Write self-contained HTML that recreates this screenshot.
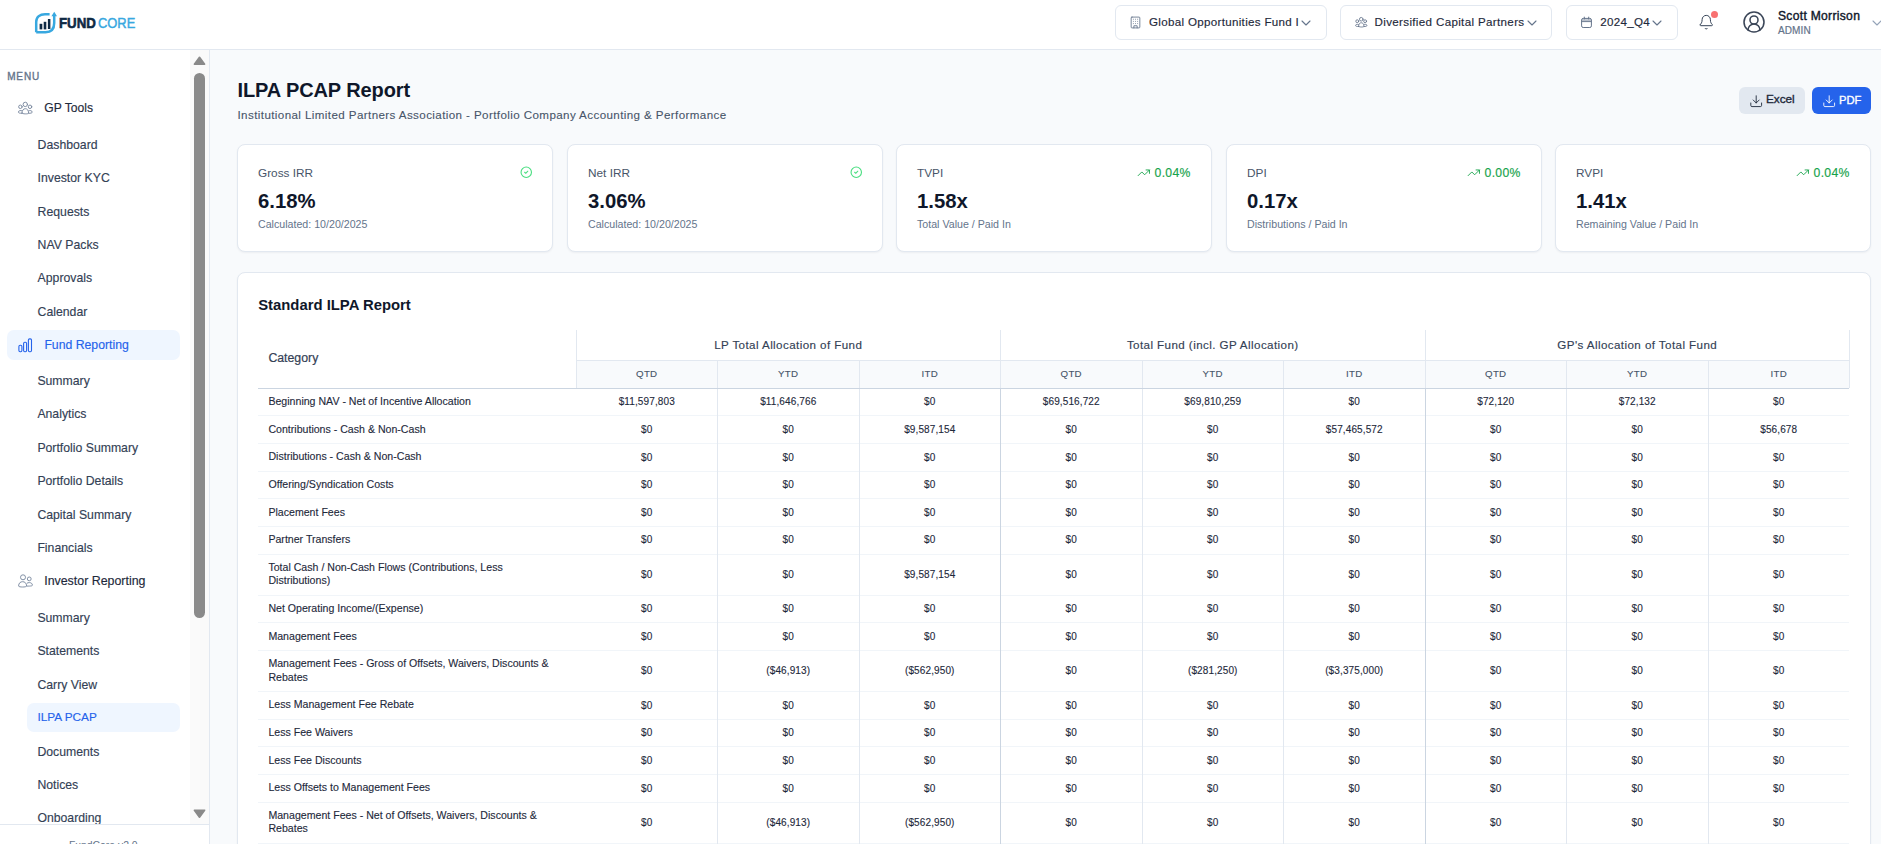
<!DOCTYPE html>
<html><head><meta charset="utf-8"><title>ILPA PCAP Report</title>
<style>
html,body{margin:0;padding:0;}
body{width:1881px;height:844px;overflow:hidden;position:relative;background:#f8fafc;font-family:"Liberation Sans",sans-serif;}
.t{position:absolute;white-space:nowrap;line-height:1;}
.b{position:absolute;}
</style></head><body>
<div class="b" style="left:0px;top:0px;width:1881px;height:49px;background:#fff;"></div>
<div class="b" style="left:0px;top:49px;width:1881px;height:1px;background:#e2e8f0;"></div>
<svg class="b" style="left:34px;top:11px;" width="23" height="23" viewBox="0 0 23 23" fill="none">
<path d="M2.2 21.2 L2.2 11 C2.2 5.8 6 3.2 11 3.2 L15.6 3.2" stroke="#38a8e0" stroke-width="2.5" stroke-linecap="butt"/>
<path d="M2.2 21.2 L11.5 21.2 C17.5 21.2 20.2 17.5 20.2 12 L20.2 4.5" stroke="#38a8e0" stroke-width="2.5"/>
<path d="M17.4 5.2 L20.2 0.8 L23 5.2 Z" fill="#38a8e0"/>
<rect x="5.6" y="12.8" width="2.7" height="5.6" fill="#0f2a44"/>
<rect x="9.7" y="10.8" width="2.6" height="7.6" fill="#0f2a44"/>
<rect x="13.9" y="8" width="2.5" height="10" fill="#0f2a44"/>
</svg>
<div class="t " style="left:59px;top:15.33px;font-size:15.2px;color:#0f2a44;font-weight:700;transform:scaleX(0.875);transform-origin:0 0;-webkit-text-stroke:0.6px #0f2a44;">FUND</div>
<div class="t " style="left:98.3px;top:15.33px;font-size:15.2px;color:#38a8e0;font-weight:400;transform:scaleX(0.85);transform-origin:0 0;-webkit-text-stroke:0.45px #38a8e0;">CORE</div>
<div class="b" style="left:1115px;top:5px;width:212px;height:35px;border:1px solid #e2e8f0;border-radius:6px;background:#fff;box-sizing:border-box;"></div>
<svg class="b" style="left:1128.9px;top:15.9px;" width="13" height="13" viewBox="0 0 24 24" fill="none" stroke="#64748b" stroke-width="1.6" stroke-linecap="round" stroke-linejoin="round"><rect width="16" height="20" x="4" y="2" rx="1.5" ry="1.5"/><path d="M9 22v-4h6v4"/><path d="M8 6h.01"/><path d="M16 6h.01"/><path d="M12 6h.01"/><path d="M12 10h.01"/><path d="M12 14h.01"/><path d="M16 10h.01"/><path d="M16 14h.01"/><path d="M8 10h.01"/><path d="M8 14h.01"/></svg>
<div class="t " style="left:1149px;top:16.28px;font-size:11.6px;color:#1e293b;font-weight:400;letter-spacing:0.31px;-webkit-text-stroke:0.15px #1e293b;">Global Opportunities Fund I</div>
<svg class="b" style="left:1297.6px;top:14.7px;" width="16" height="16" viewBox="0 0 24 24" fill="none" stroke="#64748b" stroke-width="1.6" stroke-linecap="round" stroke-linejoin="round"><path d="m6 9 6 6 6-6"/></svg>
<div class="b" style="left:1340px;top:5px;width:212px;height:35px;border:1px solid #e2e8f0;border-radius:6px;background:#fff;box-sizing:border-box;"></div>
<svg class="b" style="left:1351.7px;top:14.25px;" width="18.04" height="16.4" viewBox="0 0 22 20" fill="none" stroke="#64748b" stroke-width="1.0365853658536586" stroke-linecap="round" stroke-linejoin="round"><circle cx="11.3" cy="6.4" r="2.2"/><circle cx="6.4" cy="8.8" r="1.75"/><circle cx="16" cy="8.8" r="1.75"/><path d="M8 15.1 C8 12 9.6 10.7 11.3 10.7 C13 10.7 14.6 12 14.6 15.1 C14.6 16.2 8 16.2 8 15.1 Z"/><path d="M7.7 12.7 C6.9 12.3 4.4 12.4 4.4 14.1 C4.4 15 5.6 15.3 7.9 15.3"/><path d="M14.9 12.7 C15.7 12.3 18.2 12.4 18.2 14.1 C18.2 15 17 15.3 14.7 15.3"/></svg>
<div class="t " style="left:1374.5px;top:16.28px;font-size:11.6px;color:#1e293b;font-weight:400;letter-spacing:0.34px;-webkit-text-stroke:0.15px #1e293b;">Diversified Capital Partners</div>
<svg class="b" style="left:1524.1px;top:14.7px;" width="16" height="16" viewBox="0 0 24 24" fill="none" stroke="#64748b" stroke-width="1.6" stroke-linecap="round" stroke-linejoin="round"><path d="m6 9 6 6 6-6"/></svg>
<div class="b" style="left:1566px;top:5px;width:112px;height:35px;border:1px solid #e2e8f0;border-radius:6px;background:#fff;box-sizing:border-box;"></div>
<svg class="b" style="left:1578px;top:14px;" width="16" height="16" viewBox="0 0 16 16" fill="none"><rect x="3.6" y="4.4" width="9.8" height="9.1" rx="1.6" stroke="#64748b" stroke-width="1"/><path d="M4.1 5.2 H12.9 V7.6 H4.1 Z" fill="#64748b" fill-opacity="0.45"/><path d="M3.6 7.6 H13.4" stroke="#64748b" stroke-width="0.9"/><path d="M6.3 3.1 V5 M10.7 3.1 V5" stroke="#64748b" stroke-width="1" stroke-linecap="round"/></svg>
<div class="t " style="left:1600.3px;top:16.28px;font-size:11.6px;color:#1e293b;font-weight:400;letter-spacing:0.3px;-webkit-text-stroke:0.15px #1e293b;">2024_Q4</div>
<svg class="b" style="left:1648.6px;top:14.7px;" width="16" height="16" viewBox="0 0 24 24" fill="none" stroke="#64748b" stroke-width="1.6" stroke-linecap="round" stroke-linejoin="round"><path d="m6 9 6 6 6-6"/></svg>
<svg class="b" style="left:1697.9px;top:14.2px;" width="16.5" height="16.5" viewBox="0 0 24 24" fill="none" stroke="#334155" stroke-width="1.45" stroke-linecap="round" stroke-linejoin="round"><path d="M10.268 21a2 2 0 0 0 3.464 0"/><path d="M3.262 15.326A1 1 0 0 0 4 17h16a1 1 0 0 0 .74-1.673C19.41 13.956 18 12.499 18 8A6 6 0 0 0 6 8c0 4.499-1.411 5.956-2.738 7.326"/></svg>
<div class="b" style="left:1710.9px;top:10.8px;width:7px;height:7px;background:#f87171;border-radius:50%;"></div>
<svg class="b" style="left:1742.2px;top:10.1px;" width="24" height="24" viewBox="0 0 24 24" fill="none" stroke="#3b4658" stroke-width="1.55" stroke-linecap="round" stroke-linejoin="round"><path d="M18 20a6 6 0 0 0-12 0"/><circle cx="12" cy="10" r="4"/><circle cx="12" cy="12" r="10"/></svg>
<div class="t " style="left:1778px;top:9.86px;font-size:12.1px;color:#0f172a;font-weight:400;letter-spacing:0.3px;-webkit-text-stroke:0.4px #0f172a;">Scott Morrison</div>
<div class="t " style="left:1778px;top:26.43px;font-size:10.0px;color:#64748b;font-weight:400;letter-spacing:0.1px;-webkit-text-stroke:0.2px #64748b;">ADMIN</div>
<svg class="b" style="left:1868.5px;top:14.5px;" width="16" height="16" viewBox="0 0 24 24" fill="none" stroke="#94a3b8" stroke-width="1.6" stroke-linecap="round" stroke-linejoin="round"><path d="m6 9 6 6 6-6"/></svg>
<div class="b" style="left:0px;top:50px;width:209px;height:794px;background:#fff;"></div>
<div class="b" style="left:209px;top:50px;width:1px;height:794px;background:#e2e8f0;"></div>
<div class="b" style="left:190px;top:50px;width:19px;height:774px;background:#fafafa;"></div>
<svg class="b" style="left:192px;top:55px;" width="15" height="11" viewBox="0 0 15 11" fill="none"><path d="M7.5 2.3 L12.6 9.2 H2.4 Z" fill="#8a8a8a" stroke="#8a8a8a" stroke-width="1.6" stroke-linejoin="round"/></svg>
<div class="b" style="left:194px;top:73px;width:11px;height:545px;background:#8a8a8a;border-radius:5.5px;"></div>
<svg class="b" style="left:192px;top:808px;" width="15" height="11" viewBox="0 0 15 11" fill="none"><path d="M7.5 9.2 L12.6 2.2 H2.4 Z" fill="#8a8a8a" stroke="#8a8a8a" stroke-width="1.6" stroke-linejoin="round"/></svg>
<div class="t " style="left:7.2px;top:71.53px;font-size:10px;color:#64748b;font-weight:400;letter-spacing:0.85px;-webkit-text-stroke:0.35px #64748b;">MENU</div>
<svg class="b" style="left:14px;top:98px;" width="22.0" height="20.0" viewBox="0 0 22 20" fill="none" stroke="#7b8aa0" stroke-width="0.95" stroke-linecap="round" stroke-linejoin="round"><circle cx="11.3" cy="6.4" r="2.2"/><circle cx="6.4" cy="8.8" r="1.75"/><circle cx="16" cy="8.8" r="1.75"/><path d="M8 15.1 C8 12 9.6 10.7 11.3 10.7 C13 10.7 14.6 12 14.6 15.1 C14.6 16.2 8 16.2 8 15.1 Z"/><path d="M7.7 12.7 C6.9 12.3 4.4 12.4 4.4 14.1 C4.4 15 5.6 15.3 7.9 15.3"/><path d="M14.9 12.7 C15.7 12.3 18.2 12.4 18.2 14.1 C18.2 15 17 15.3 14.7 15.3"/></svg>
<div class="t " style="left:44.3px;top:101.76px;font-size:12.1px;color:#1e293b;font-weight:400;-webkit-text-stroke:0.15px #1e293b;">GP Tools</div>
<div class="t " style="left:37.6px;top:139.03px;font-size:12.25px;color:#334155;font-weight:400;-webkit-text-stroke:0.15px #334155;">Dashboard</div>
<div class="t " style="left:37.6px;top:172.35px;font-size:12.25px;color:#334155;font-weight:400;-webkit-text-stroke:0.15px #334155;">Investor KYC</div>
<div class="t " style="left:37.6px;top:205.67px;font-size:12.25px;color:#334155;font-weight:400;-webkit-text-stroke:0.15px #334155;">Requests</div>
<div class="t " style="left:37.6px;top:238.99px;font-size:12.25px;color:#334155;font-weight:400;-webkit-text-stroke:0.15px #334155;">NAV Packs</div>
<div class="t " style="left:37.6px;top:272.31px;font-size:12.25px;color:#334155;font-weight:400;-webkit-text-stroke:0.15px #334155;">Approvals</div>
<div class="t " style="left:37.6px;top:305.63px;font-size:12.25px;color:#334155;font-weight:400;-webkit-text-stroke:0.15px #334155;">Calendar</div>
<div class="b" style="left:7px;top:330px;width:173px;height:30px;background:#eff6ff;border-radius:7px;"></div>
<svg class="b" style="left:14px;top:334px;" width="22" height="22" viewBox="0 0 22 22" fill="none"><rect x="4.9" y="11.3" width="3" height="6.4" rx="1.2" stroke="#2563eb" stroke-width="1.1"/><rect x="9.6" y="8.3" width="3" height="9.4" rx="1.2" stroke="#2563eb" stroke-width="1.1"/><rect x="14.4" y="4.9" width="3.1" height="12.8" rx="1.2" stroke="#2563eb" stroke-width="1.1"/></svg>
<div class="t " style="left:44.4px;top:338.93px;font-size:12.25px;color:#2563eb;font-weight:400;-webkit-text-stroke:0.15px #2563eb;">Fund Reporting</div>
<div class="t " style="left:37.4px;top:374.83px;font-size:12.25px;color:#334155;font-weight:400;-webkit-text-stroke:0.15px #334155;">Summary</div>
<div class="t " style="left:37.4px;top:408.25px;font-size:12.25px;color:#334155;font-weight:400;-webkit-text-stroke:0.15px #334155;">Analytics</div>
<div class="t " style="left:37.4px;top:441.67px;font-size:12.25px;color:#334155;font-weight:400;-webkit-text-stroke:0.15px #334155;">Portfolio Summary</div>
<div class="t " style="left:37.4px;top:475.09px;font-size:12.25px;color:#334155;font-weight:400;-webkit-text-stroke:0.15px #334155;">Portfolio Details</div>
<div class="t " style="left:37.4px;top:508.51px;font-size:12.25px;color:#334155;font-weight:400;-webkit-text-stroke:0.15px #334155;">Capital Summary</div>
<div class="t " style="left:37.4px;top:541.93px;font-size:12.25px;color:#334155;font-weight:400;-webkit-text-stroke:0.15px #334155;">Financials</div>
<svg class="b" style="left:14px;top:570px;stroke:#7b8aa0;stroke-width:0.95;" width="22" height="22" viewBox="0 0 22 22" fill="none"><circle cx="9" cy="7.3" r="2.5"/><circle cx="15.25" cy="8.9" r="1.9"/><path d="M4.6 16.1 C4.6 12.9 6.6 11.7 8.6 11.7 C10.6 11.7 12.6 12.9 12.6 16.1 C12.6 17.3 4.6 17.3 4.6 16.1 Z"/><path d="M12.9 13.3 C13.5 12.8 14.5 12.6 15.4 12.6 C17 12.6 18.4 13.6 18.4 15.1 C18.4 16 17 16.1 12.7 16.1"/></svg>
<div class="t " style="left:44.2px;top:574.60px;font-size:12.4px;color:#1e293b;font-weight:400;-webkit-text-stroke:0.15px #1e293b;">Investor Reporting</div>
<div class="b" style="left:27px;top:703px;width:153px;height:29px;background:#eff6ff;border-radius:7px;"></div>
<div class="t " style="left:37.4px;top:611.73px;font-size:12.25px;color:#334155;font-weight:400;-webkit-text-stroke:0.15px #334155;">Summary</div>
<div class="t " style="left:37.4px;top:645.18px;font-size:12.25px;color:#334155;font-weight:400;-webkit-text-stroke:0.15px #334155;">Statements</div>
<div class="t " style="left:37.4px;top:678.63px;font-size:12.25px;color:#334155;font-weight:400;-webkit-text-stroke:0.15px #334155;">Carry View</div>
<div class="t " style="left:37.4px;top:712.46px;font-size:11.8px;color:#2563eb;font-weight:400;-webkit-text-stroke:0.15px #2563eb;">ILPA PCAP</div>
<div class="t " style="left:37.4px;top:745.53px;font-size:12.25px;color:#334155;font-weight:400;-webkit-text-stroke:0.15px #334155;">Documents</div>
<div class="t " style="left:37.4px;top:778.98px;font-size:12.25px;color:#334155;font-weight:400;-webkit-text-stroke:0.15px #334155;">Notices</div>
<div class="t " style="left:37.4px;top:812.43px;font-size:12.25px;color:#334155;font-weight:400;-webkit-text-stroke:0.15px #334155;">Onboarding</div>
<div class="b" style="left:0px;top:824px;width:209px;height:20px;background:#fff;"></div>
<div class="b" style="left:0px;top:824px;width:209px;height:1px;background:#e2e8f0;"></div>
<div class="t " style="left:68.9px;top:840.70px;font-size:10.4px;color:#64748b;font-weight:400;">FundCore v2.0</div>
<div class="b" style="left:210px;top:50px;width:1671px;height:794px;background:#f8fafc;"></div>
<div class="t " style="left:237.5px;top:79.77px;font-size:20px;color:#0f172a;font-weight:700;letter-spacing:-0.1px;">ILPA PCAP Report</div>
<div class="t " style="left:237.5px;top:109.08px;font-size:11.6px;color:#475569;font-weight:400;letter-spacing:0.4px;-webkit-text-stroke:0.1px #475569;">Institutional Limited Partners Association - Portfolio Company Accounting &amp; Performance</div>
<div class="b" style="left:1739px;top:87px;width:66px;height:27px;background:#e2e8f0;border-radius:6px;"></div>
<svg class="b" style="left:1748.8px;top:94.4px;" width="14.4" height="14.4" viewBox="0 0 24 24" fill="none" stroke="#1e293b" stroke-width="1.5" stroke-linecap="round" stroke-linejoin="round"><path d="M21 15v4a2 2 0 0 1-2 2H5a2 2 0 0 1-2-2v-4"/><polyline points="7 10 12 15 17 10"/><line x1="12" x2="12" y1="15" y2="3"/></svg>
<div class="t " style="left:1765.9px;top:94.41px;font-size:11.8px;color:#1e293b;font-weight:400;-webkit-text-stroke:0.35px #1e293b;">Excel</div>
<div class="b" style="left:1812px;top:87px;width:59px;height:27px;background:#2563eb;border-radius:6px;"></div>
<svg class="b" style="left:1821.8px;top:94.4px;" width="14.4" height="14.4" viewBox="0 0 24 24" fill="none" stroke="#ffffff" stroke-width="1.5" stroke-linecap="round" stroke-linejoin="round"><path d="M21 15v4a2 2 0 0 1-2 2H5a2 2 0 0 1-2-2v-4"/><polyline points="7 10 12 15 17 10"/><line x1="12" x2="12" y1="15" y2="3"/></svg>
<div class="t " style="left:1839px;top:94.92px;font-size:11.2px;color:#ffffff;font-weight:400;-webkit-text-stroke:0.35px #fff;">PDF</div>
<div class="b" style="left:237px;top:144px;width:316px;height:108px;background:#fff;border:1px solid #e2e8f0;border-radius:8px;box-sizing:border-box;box-shadow:0 1px 2px rgba(15,23,42,0.05);"></div>
<div class="t " style="left:258px;top:167.81px;font-size:11.8px;color:#475569;font-weight:400;">Gross IRR</div>
<div class="t " style="left:258px;top:190.52px;font-size:20.3px;color:#0f172a;font-weight:700;">6.18%</div>
<div class="t " style="left:258px;top:218.88px;font-size:10.65px;color:#64748b;font-weight:400;">Calculated: 10/20/2025</div>
<svg class="b" style="left:519.7px;top:166.1px;" width="12.5" height="12.5" viewBox="0 0 24 24" fill="none" stroke="#4ade80" stroke-width="2.1" stroke-linecap="round" stroke-linejoin="round"><circle cx="12" cy="12" r="10"/><path d="m9 12 2 2 4-4"/></svg>
<div class="b" style="left:567px;top:144px;width:316px;height:108px;background:#fff;border:1px solid #e2e8f0;border-radius:8px;box-sizing:border-box;box-shadow:0 1px 2px rgba(15,23,42,0.05);"></div>
<div class="t " style="left:588px;top:167.81px;font-size:11.8px;color:#475569;font-weight:400;">Net IRR</div>
<div class="t " style="left:588px;top:190.52px;font-size:20.3px;color:#0f172a;font-weight:700;">3.06%</div>
<div class="t " style="left:588px;top:218.88px;font-size:10.65px;color:#64748b;font-weight:400;">Calculated: 10/20/2025</div>
<svg class="b" style="left:849.7px;top:166.1px;" width="12.5" height="12.5" viewBox="0 0 24 24" fill="none" stroke="#4ade80" stroke-width="2.1" stroke-linecap="round" stroke-linejoin="round"><circle cx="12" cy="12" r="10"/><path d="m9 12 2 2 4-4"/></svg>
<div class="b" style="left:896px;top:144px;width:316px;height:108px;background:#fff;border:1px solid #e2e8f0;border-radius:8px;box-sizing:border-box;box-shadow:0 1px 2px rgba(15,23,42,0.05);"></div>
<div class="t " style="left:917px;top:167.81px;font-size:11.8px;color:#475569;font-weight:400;">TVPI</div>
<div class="t " style="left:917px;top:190.52px;font-size:20.3px;color:#0f172a;font-weight:700;">1.58x</div>
<div class="t " style="left:917px;top:218.88px;font-size:10.65px;color:#64748b;font-weight:400;">Total Value / Paid In</div>
<div class="t" style="right:690.2px;top:167.07px;font-size:12.2px;color:#16a34a;font-weight:400;text-align:right;letter-spacing:0.35px;-webkit-text-stroke:0.15px #16a34a;">0.04%</div>
<svg class="b" style="left:1137.0px;top:165.6px;" width="13.6" height="13.6" viewBox="0 0 24 24" fill="none" stroke="#16a34a" stroke-width="1.6" stroke-linecap="round" stroke-linejoin="round"><polyline points="22 7 13.5 15.5 8.5 10.5 2 17"/><polyline points="16 7 22 7 22 13"/></svg>
<div class="b" style="left:1226px;top:144px;width:316px;height:108px;background:#fff;border:1px solid #e2e8f0;border-radius:8px;box-sizing:border-box;box-shadow:0 1px 2px rgba(15,23,42,0.05);"></div>
<div class="t " style="left:1247px;top:167.81px;font-size:11.8px;color:#475569;font-weight:400;">DPI</div>
<div class="t " style="left:1247px;top:190.52px;font-size:20.3px;color:#0f172a;font-weight:700;">0.17x</div>
<div class="t " style="left:1247px;top:218.88px;font-size:10.65px;color:#64748b;font-weight:400;">Distributions / Paid In</div>
<div class="t" style="right:360.20000000000005px;top:167.07px;font-size:12.2px;color:#16a34a;font-weight:400;text-align:right;letter-spacing:0.35px;-webkit-text-stroke:0.15px #16a34a;">0.00%</div>
<svg class="b" style="left:1467.0px;top:165.6px;" width="13.6" height="13.6" viewBox="0 0 24 24" fill="none" stroke="#16a34a" stroke-width="1.6" stroke-linecap="round" stroke-linejoin="round"><polyline points="22 7 13.5 15.5 8.5 10.5 2 17"/><polyline points="16 7 22 7 22 13"/></svg>
<div class="b" style="left:1555px;top:144px;width:316px;height:108px;background:#fff;border:1px solid #e2e8f0;border-radius:8px;box-sizing:border-box;box-shadow:0 1px 2px rgba(15,23,42,0.05);"></div>
<div class="t " style="left:1576px;top:167.81px;font-size:11.8px;color:#475569;font-weight:400;">RVPI</div>
<div class="t " style="left:1576px;top:190.52px;font-size:20.3px;color:#0f172a;font-weight:700;">1.41x</div>
<div class="t " style="left:1576px;top:218.88px;font-size:10.65px;color:#64748b;font-weight:400;">Remaining Value / Paid In</div>
<div class="t" style="right:31.200000000000045px;top:167.07px;font-size:12.2px;color:#16a34a;font-weight:400;text-align:right;letter-spacing:0.35px;-webkit-text-stroke:0.15px #16a34a;">0.04%</div>
<svg class="b" style="left:1796.0px;top:165.6px;" width="13.6" height="13.6" viewBox="0 0 24 24" fill="none" stroke="#16a34a" stroke-width="1.6" stroke-linecap="round" stroke-linejoin="round"><polyline points="22 7 13.5 15.5 8.5 10.5 2 17"/><polyline points="16 7 22 7 22 13"/></svg>
<div class="b" style="left:237px;top:272px;width:1634px;height:600px;background:#fff;border:1px solid #e2e8f0;border-radius:8px;box-sizing:border-box;box-shadow:0 1px 2px rgba(15,23,42,0.05);"></div>
<div class="t " style="left:258.2px;top:298.13px;font-size:14.85px;color:#0f172a;font-weight:700;">Standard ILPA Report</div>
<div class="b" style="left:258px;top:360px;width:1591px;height:28px;background:transparent;"></div>
<div class="b" style="left:576px;top:360px;width:1273px;height:28px;background:#f8fafc;"></div>
<div class="b" style="left:576px;top:360px;width:1273px;height:1px;background:#e2e8f0;"></div>
<div class="b" style="left:258px;top:388px;width:1591px;height:1px;background:#cbd5e1;"></div>
<div class="t " style="left:268.4px;top:351.89px;font-size:12.3px;color:#334155;font-weight:400;-webkit-text-stroke:0.2px #334155;">Category</div>
<div class="b" style="left:576px;top:330px;width:1px;height:58px;background:#e2e8f0;"></div>
<div class="t" style="left:488.25px;width:600px;text-align:center;top:339.48px;font-size:11.6px;color:#334155;font-weight:400;letter-spacing:0.42px;-webkit-text-stroke:0.15px #334155;">LP Total Allocation of Fund</div>
<div class="t" style="left:346.75px;width:600px;text-align:center;top:369.19px;font-size:9.7px;color:#475569;font-weight:400;letter-spacing:0.3px;-webkit-text-stroke:0.12px #475569;">QTD</div>
<div class="b" style="left:717px;top:361px;width:1px;height:27px;background:#e2e8f0;"></div>
<div class="t" style="left:488.25px;width:600px;text-align:center;top:369.19px;font-size:9.7px;color:#475569;font-weight:400;letter-spacing:0.3px;-webkit-text-stroke:0.12px #475569;">YTD</div>
<div class="b" style="left:859px;top:361px;width:1px;height:27px;background:#e2e8f0;"></div>
<div class="t" style="left:629.75px;width:600px;text-align:center;top:369.19px;font-size:9.7px;color:#475569;font-weight:400;letter-spacing:0.3px;-webkit-text-stroke:0.12px #475569;">ITD</div>
<div class="b" style="left:1000px;top:330px;width:1px;height:58px;background:#e2e8f0;"></div>
<div class="t" style="left:912.75px;width:600px;text-align:center;top:339.48px;font-size:11.6px;color:#334155;font-weight:400;letter-spacing:0.42px;-webkit-text-stroke:0.15px #334155;">Total Fund (incl. GP Allocation)</div>
<div class="t" style="left:771.25px;width:600px;text-align:center;top:369.19px;font-size:9.7px;color:#475569;font-weight:400;letter-spacing:0.3px;-webkit-text-stroke:0.12px #475569;">QTD</div>
<div class="b" style="left:1142px;top:361px;width:1px;height:27px;background:#e2e8f0;"></div>
<div class="t" style="left:912.75px;width:600px;text-align:center;top:369.19px;font-size:9.7px;color:#475569;font-weight:400;letter-spacing:0.3px;-webkit-text-stroke:0.12px #475569;">YTD</div>
<div class="b" style="left:1283px;top:361px;width:1px;height:27px;background:#e2e8f0;"></div>
<div class="t" style="left:1054.25px;width:600px;text-align:center;top:369.19px;font-size:9.7px;color:#475569;font-weight:400;letter-spacing:0.3px;-webkit-text-stroke:0.12px #475569;">ITD</div>
<div class="b" style="left:1425px;top:330px;width:1px;height:58px;background:#e2e8f0;"></div>
<div class="t" style="left:1337.25px;width:600px;text-align:center;top:339.48px;font-size:11.6px;color:#334155;font-weight:400;letter-spacing:0.42px;-webkit-text-stroke:0.15px #334155;">GP's Allocation of Total Fund</div>
<div class="t" style="left:1195.75px;width:600px;text-align:center;top:369.19px;font-size:9.7px;color:#475569;font-weight:400;letter-spacing:0.3px;-webkit-text-stroke:0.12px #475569;">QTD</div>
<div class="b" style="left:1566px;top:361px;width:1px;height:27px;background:#e2e8f0;"></div>
<div class="t" style="left:1337.25px;width:600px;text-align:center;top:369.19px;font-size:9.7px;color:#475569;font-weight:400;letter-spacing:0.3px;-webkit-text-stroke:0.12px #475569;">YTD</div>
<div class="b" style="left:1708px;top:361px;width:1px;height:27px;background:#e2e8f0;"></div>
<div class="t" style="left:1478.75px;width:600px;text-align:center;top:369.19px;font-size:9.7px;color:#475569;font-weight:400;letter-spacing:0.3px;-webkit-text-stroke:0.12px #475569;">ITD</div>
<div class="b" style="left:1849px;top:330px;width:1px;height:58px;background:#e2e8f0;"></div>
<div class="t " style="left:268.4px;top:396.15px;font-size:10.6px;color:#1e293b;font-weight:400;-webkit-text-stroke:0.12px #1e293b;">Beginning NAV - Net of Incentive Allocation</div>
<div class="t" style="left:346.75px;width:600px;text-align:center;top:397.25px;font-size:10.0px;color:#1e293b;font-weight:400;letter-spacing:0.12px;-webkit-text-stroke:0.12px #1e293b;">$11,597,803</div>
<div class="t" style="left:488.25px;width:600px;text-align:center;top:397.25px;font-size:10.0px;color:#1e293b;font-weight:400;letter-spacing:0.12px;-webkit-text-stroke:0.12px #1e293b;">$11,646,766</div>
<div class="t" style="left:629.75px;width:600px;text-align:center;top:397.25px;font-size:10.0px;color:#1e293b;font-weight:400;letter-spacing:0.12px;-webkit-text-stroke:0.12px #1e293b;">$0</div>
<div class="t" style="left:771.25px;width:600px;text-align:center;top:397.25px;font-size:10.0px;color:#1e293b;font-weight:400;letter-spacing:0.12px;-webkit-text-stroke:0.12px #1e293b;">$69,516,722</div>
<div class="t" style="left:912.75px;width:600px;text-align:center;top:397.25px;font-size:10.0px;color:#1e293b;font-weight:400;letter-spacing:0.12px;-webkit-text-stroke:0.12px #1e293b;">$69,810,259</div>
<div class="t" style="left:1054.25px;width:600px;text-align:center;top:397.25px;font-size:10.0px;color:#1e293b;font-weight:400;letter-spacing:0.12px;-webkit-text-stroke:0.12px #1e293b;">$0</div>
<div class="t" style="left:1195.75px;width:600px;text-align:center;top:397.25px;font-size:10.0px;color:#1e293b;font-weight:400;letter-spacing:0.12px;-webkit-text-stroke:0.12px #1e293b;">$72,120</div>
<div class="t" style="left:1337.25px;width:600px;text-align:center;top:397.25px;font-size:10.0px;color:#1e293b;font-weight:400;letter-spacing:0.12px;-webkit-text-stroke:0.12px #1e293b;">$72,132</div>
<div class="t" style="left:1478.75px;width:600px;text-align:center;top:397.25px;font-size:10.0px;color:#1e293b;font-weight:400;letter-spacing:0.12px;-webkit-text-stroke:0.12px #1e293b;">$0</div>
<div class="b" style="left:258px;top:415px;width:1591px;height:1px;background:#f1f5f9;"></div>
<div class="t " style="left:268.4px;top:423.79px;font-size:10.6px;color:#1e293b;font-weight:400;-webkit-text-stroke:0.12px #1e293b;">Contributions - Cash &amp; Non-Cash</div>
<div class="t" style="left:346.75px;width:600px;text-align:center;top:424.89px;font-size:10.0px;color:#1e293b;font-weight:400;letter-spacing:0.12px;-webkit-text-stroke:0.12px #1e293b;">$0</div>
<div class="t" style="left:488.25px;width:600px;text-align:center;top:424.89px;font-size:10.0px;color:#1e293b;font-weight:400;letter-spacing:0.12px;-webkit-text-stroke:0.12px #1e293b;">$0</div>
<div class="t" style="left:629.75px;width:600px;text-align:center;top:424.89px;font-size:10.0px;color:#1e293b;font-weight:400;letter-spacing:0.12px;-webkit-text-stroke:0.12px #1e293b;">$9,587,154</div>
<div class="t" style="left:771.25px;width:600px;text-align:center;top:424.89px;font-size:10.0px;color:#1e293b;font-weight:400;letter-spacing:0.12px;-webkit-text-stroke:0.12px #1e293b;">$0</div>
<div class="t" style="left:912.75px;width:600px;text-align:center;top:424.89px;font-size:10.0px;color:#1e293b;font-weight:400;letter-spacing:0.12px;-webkit-text-stroke:0.12px #1e293b;">$0</div>
<div class="t" style="left:1054.25px;width:600px;text-align:center;top:424.89px;font-size:10.0px;color:#1e293b;font-weight:400;letter-spacing:0.12px;-webkit-text-stroke:0.12px #1e293b;">$57,465,572</div>
<div class="t" style="left:1195.75px;width:600px;text-align:center;top:424.89px;font-size:10.0px;color:#1e293b;font-weight:400;letter-spacing:0.12px;-webkit-text-stroke:0.12px #1e293b;">$0</div>
<div class="t" style="left:1337.25px;width:600px;text-align:center;top:424.89px;font-size:10.0px;color:#1e293b;font-weight:400;letter-spacing:0.12px;-webkit-text-stroke:0.12px #1e293b;">$0</div>
<div class="t" style="left:1478.75px;width:600px;text-align:center;top:424.89px;font-size:10.0px;color:#1e293b;font-weight:400;letter-spacing:0.12px;-webkit-text-stroke:0.12px #1e293b;">$56,678</div>
<div class="b" style="left:258px;top:443px;width:1591px;height:1px;background:#f1f5f9;"></div>
<div class="t " style="left:268.4px;top:451.43px;font-size:10.6px;color:#1e293b;font-weight:400;-webkit-text-stroke:0.12px #1e293b;">Distributions - Cash &amp; Non-Cash</div>
<div class="t" style="left:346.75px;width:600px;text-align:center;top:452.53px;font-size:10.0px;color:#1e293b;font-weight:400;letter-spacing:0.12px;-webkit-text-stroke:0.12px #1e293b;">$0</div>
<div class="t" style="left:488.25px;width:600px;text-align:center;top:452.53px;font-size:10.0px;color:#1e293b;font-weight:400;letter-spacing:0.12px;-webkit-text-stroke:0.12px #1e293b;">$0</div>
<div class="t" style="left:629.75px;width:600px;text-align:center;top:452.53px;font-size:10.0px;color:#1e293b;font-weight:400;letter-spacing:0.12px;-webkit-text-stroke:0.12px #1e293b;">$0</div>
<div class="t" style="left:771.25px;width:600px;text-align:center;top:452.53px;font-size:10.0px;color:#1e293b;font-weight:400;letter-spacing:0.12px;-webkit-text-stroke:0.12px #1e293b;">$0</div>
<div class="t" style="left:912.75px;width:600px;text-align:center;top:452.53px;font-size:10.0px;color:#1e293b;font-weight:400;letter-spacing:0.12px;-webkit-text-stroke:0.12px #1e293b;">$0</div>
<div class="t" style="left:1054.25px;width:600px;text-align:center;top:452.53px;font-size:10.0px;color:#1e293b;font-weight:400;letter-spacing:0.12px;-webkit-text-stroke:0.12px #1e293b;">$0</div>
<div class="t" style="left:1195.75px;width:600px;text-align:center;top:452.53px;font-size:10.0px;color:#1e293b;font-weight:400;letter-spacing:0.12px;-webkit-text-stroke:0.12px #1e293b;">$0</div>
<div class="t" style="left:1337.25px;width:600px;text-align:center;top:452.53px;font-size:10.0px;color:#1e293b;font-weight:400;letter-spacing:0.12px;-webkit-text-stroke:0.12px #1e293b;">$0</div>
<div class="t" style="left:1478.75px;width:600px;text-align:center;top:452.53px;font-size:10.0px;color:#1e293b;font-weight:400;letter-spacing:0.12px;-webkit-text-stroke:0.12px #1e293b;">$0</div>
<div class="b" style="left:258px;top:471px;width:1591px;height:1px;background:#f1f5f9;"></div>
<div class="t " style="left:268.4px;top:479.07px;font-size:10.6px;color:#1e293b;font-weight:400;-webkit-text-stroke:0.12px #1e293b;">Offering/Syndication Costs</div>
<div class="t" style="left:346.75px;width:600px;text-align:center;top:480.17px;font-size:10.0px;color:#1e293b;font-weight:400;letter-spacing:0.12px;-webkit-text-stroke:0.12px #1e293b;">$0</div>
<div class="t" style="left:488.25px;width:600px;text-align:center;top:480.17px;font-size:10.0px;color:#1e293b;font-weight:400;letter-spacing:0.12px;-webkit-text-stroke:0.12px #1e293b;">$0</div>
<div class="t" style="left:629.75px;width:600px;text-align:center;top:480.17px;font-size:10.0px;color:#1e293b;font-weight:400;letter-spacing:0.12px;-webkit-text-stroke:0.12px #1e293b;">$0</div>
<div class="t" style="left:771.25px;width:600px;text-align:center;top:480.17px;font-size:10.0px;color:#1e293b;font-weight:400;letter-spacing:0.12px;-webkit-text-stroke:0.12px #1e293b;">$0</div>
<div class="t" style="left:912.75px;width:600px;text-align:center;top:480.17px;font-size:10.0px;color:#1e293b;font-weight:400;letter-spacing:0.12px;-webkit-text-stroke:0.12px #1e293b;">$0</div>
<div class="t" style="left:1054.25px;width:600px;text-align:center;top:480.17px;font-size:10.0px;color:#1e293b;font-weight:400;letter-spacing:0.12px;-webkit-text-stroke:0.12px #1e293b;">$0</div>
<div class="t" style="left:1195.75px;width:600px;text-align:center;top:480.17px;font-size:10.0px;color:#1e293b;font-weight:400;letter-spacing:0.12px;-webkit-text-stroke:0.12px #1e293b;">$0</div>
<div class="t" style="left:1337.25px;width:600px;text-align:center;top:480.17px;font-size:10.0px;color:#1e293b;font-weight:400;letter-spacing:0.12px;-webkit-text-stroke:0.12px #1e293b;">$0</div>
<div class="t" style="left:1478.75px;width:600px;text-align:center;top:480.17px;font-size:10.0px;color:#1e293b;font-weight:400;letter-spacing:0.12px;-webkit-text-stroke:0.12px #1e293b;">$0</div>
<div class="b" style="left:258px;top:498px;width:1591px;height:1px;background:#f1f5f9;"></div>
<div class="t " style="left:268.4px;top:506.71px;font-size:10.6px;color:#1e293b;font-weight:400;-webkit-text-stroke:0.12px #1e293b;">Placement Fees</div>
<div class="t" style="left:346.75px;width:600px;text-align:center;top:507.81px;font-size:10.0px;color:#1e293b;font-weight:400;letter-spacing:0.12px;-webkit-text-stroke:0.12px #1e293b;">$0</div>
<div class="t" style="left:488.25px;width:600px;text-align:center;top:507.81px;font-size:10.0px;color:#1e293b;font-weight:400;letter-spacing:0.12px;-webkit-text-stroke:0.12px #1e293b;">$0</div>
<div class="t" style="left:629.75px;width:600px;text-align:center;top:507.81px;font-size:10.0px;color:#1e293b;font-weight:400;letter-spacing:0.12px;-webkit-text-stroke:0.12px #1e293b;">$0</div>
<div class="t" style="left:771.25px;width:600px;text-align:center;top:507.81px;font-size:10.0px;color:#1e293b;font-weight:400;letter-spacing:0.12px;-webkit-text-stroke:0.12px #1e293b;">$0</div>
<div class="t" style="left:912.75px;width:600px;text-align:center;top:507.81px;font-size:10.0px;color:#1e293b;font-weight:400;letter-spacing:0.12px;-webkit-text-stroke:0.12px #1e293b;">$0</div>
<div class="t" style="left:1054.25px;width:600px;text-align:center;top:507.81px;font-size:10.0px;color:#1e293b;font-weight:400;letter-spacing:0.12px;-webkit-text-stroke:0.12px #1e293b;">$0</div>
<div class="t" style="left:1195.75px;width:600px;text-align:center;top:507.81px;font-size:10.0px;color:#1e293b;font-weight:400;letter-spacing:0.12px;-webkit-text-stroke:0.12px #1e293b;">$0</div>
<div class="t" style="left:1337.25px;width:600px;text-align:center;top:507.81px;font-size:10.0px;color:#1e293b;font-weight:400;letter-spacing:0.12px;-webkit-text-stroke:0.12px #1e293b;">$0</div>
<div class="t" style="left:1478.75px;width:600px;text-align:center;top:507.81px;font-size:10.0px;color:#1e293b;font-weight:400;letter-spacing:0.12px;-webkit-text-stroke:0.12px #1e293b;">$0</div>
<div class="b" style="left:258px;top:526px;width:1591px;height:1px;background:#f1f5f9;"></div>
<div class="t " style="left:268.4px;top:534.35px;font-size:10.6px;color:#1e293b;font-weight:400;-webkit-text-stroke:0.12px #1e293b;">Partner Transfers</div>
<div class="t" style="left:346.75px;width:600px;text-align:center;top:535.46px;font-size:10.0px;color:#1e293b;font-weight:400;letter-spacing:0.12px;-webkit-text-stroke:0.12px #1e293b;">$0</div>
<div class="t" style="left:488.25px;width:600px;text-align:center;top:535.46px;font-size:10.0px;color:#1e293b;font-weight:400;letter-spacing:0.12px;-webkit-text-stroke:0.12px #1e293b;">$0</div>
<div class="t" style="left:629.75px;width:600px;text-align:center;top:535.46px;font-size:10.0px;color:#1e293b;font-weight:400;letter-spacing:0.12px;-webkit-text-stroke:0.12px #1e293b;">$0</div>
<div class="t" style="left:771.25px;width:600px;text-align:center;top:535.46px;font-size:10.0px;color:#1e293b;font-weight:400;letter-spacing:0.12px;-webkit-text-stroke:0.12px #1e293b;">$0</div>
<div class="t" style="left:912.75px;width:600px;text-align:center;top:535.46px;font-size:10.0px;color:#1e293b;font-weight:400;letter-spacing:0.12px;-webkit-text-stroke:0.12px #1e293b;">$0</div>
<div class="t" style="left:1054.25px;width:600px;text-align:center;top:535.46px;font-size:10.0px;color:#1e293b;font-weight:400;letter-spacing:0.12px;-webkit-text-stroke:0.12px #1e293b;">$0</div>
<div class="t" style="left:1195.75px;width:600px;text-align:center;top:535.46px;font-size:10.0px;color:#1e293b;font-weight:400;letter-spacing:0.12px;-webkit-text-stroke:0.12px #1e293b;">$0</div>
<div class="t" style="left:1337.25px;width:600px;text-align:center;top:535.46px;font-size:10.0px;color:#1e293b;font-weight:400;letter-spacing:0.12px;-webkit-text-stroke:0.12px #1e293b;">$0</div>
<div class="t" style="left:1478.75px;width:600px;text-align:center;top:535.46px;font-size:10.0px;color:#1e293b;font-weight:400;letter-spacing:0.12px;-webkit-text-stroke:0.12px #1e293b;">$0</div>
<div class="b" style="left:258px;top:554px;width:1591px;height:1px;background:#f1f5f9;"></div>
<div class="t " style="left:268.4px;top:562.02px;font-size:10.6px;color:#1e293b;font-weight:400;-webkit-text-stroke:0.12px #1e293b;">Total Cash / Non-Cash Flows (Contributions, Less</div>
<div class="t " style="left:268.4px;top:575.42px;font-size:10.6px;color:#1e293b;font-weight:400;-webkit-text-stroke:0.12px #1e293b;">Distributions)</div>
<div class="t" style="left:346.75px;width:600px;text-align:center;top:569.82px;font-size:10.0px;color:#1e293b;font-weight:400;letter-spacing:0.12px;-webkit-text-stroke:0.12px #1e293b;">$0</div>
<div class="t" style="left:488.25px;width:600px;text-align:center;top:569.82px;font-size:10.0px;color:#1e293b;font-weight:400;letter-spacing:0.12px;-webkit-text-stroke:0.12px #1e293b;">$0</div>
<div class="t" style="left:629.75px;width:600px;text-align:center;top:569.82px;font-size:10.0px;color:#1e293b;font-weight:400;letter-spacing:0.12px;-webkit-text-stroke:0.12px #1e293b;">$9,587,154</div>
<div class="t" style="left:771.25px;width:600px;text-align:center;top:569.82px;font-size:10.0px;color:#1e293b;font-weight:400;letter-spacing:0.12px;-webkit-text-stroke:0.12px #1e293b;">$0</div>
<div class="t" style="left:912.75px;width:600px;text-align:center;top:569.82px;font-size:10.0px;color:#1e293b;font-weight:400;letter-spacing:0.12px;-webkit-text-stroke:0.12px #1e293b;">$0</div>
<div class="t" style="left:1054.25px;width:600px;text-align:center;top:569.82px;font-size:10.0px;color:#1e293b;font-weight:400;letter-spacing:0.12px;-webkit-text-stroke:0.12px #1e293b;">$0</div>
<div class="t" style="left:1195.75px;width:600px;text-align:center;top:569.82px;font-size:10.0px;color:#1e293b;font-weight:400;letter-spacing:0.12px;-webkit-text-stroke:0.12px #1e293b;">$0</div>
<div class="t" style="left:1337.25px;width:600px;text-align:center;top:569.82px;font-size:10.0px;color:#1e293b;font-weight:400;letter-spacing:0.12px;-webkit-text-stroke:0.12px #1e293b;">$0</div>
<div class="t" style="left:1478.75px;width:600px;text-align:center;top:569.82px;font-size:10.0px;color:#1e293b;font-weight:400;letter-spacing:0.12px;-webkit-text-stroke:0.12px #1e293b;">$0</div>
<div class="b" style="left:258px;top:595px;width:1591px;height:1px;background:#f1f5f9;"></div>
<div class="t " style="left:268.4px;top:603.09px;font-size:10.6px;color:#1e293b;font-weight:400;-webkit-text-stroke:0.12px #1e293b;">Net Operating Income/(Expense)</div>
<div class="t" style="left:346.75px;width:600px;text-align:center;top:604.20px;font-size:10.0px;color:#1e293b;font-weight:400;letter-spacing:0.12px;-webkit-text-stroke:0.12px #1e293b;">$0</div>
<div class="t" style="left:488.25px;width:600px;text-align:center;top:604.20px;font-size:10.0px;color:#1e293b;font-weight:400;letter-spacing:0.12px;-webkit-text-stroke:0.12px #1e293b;">$0</div>
<div class="t" style="left:629.75px;width:600px;text-align:center;top:604.20px;font-size:10.0px;color:#1e293b;font-weight:400;letter-spacing:0.12px;-webkit-text-stroke:0.12px #1e293b;">$0</div>
<div class="t" style="left:771.25px;width:600px;text-align:center;top:604.20px;font-size:10.0px;color:#1e293b;font-weight:400;letter-spacing:0.12px;-webkit-text-stroke:0.12px #1e293b;">$0</div>
<div class="t" style="left:912.75px;width:600px;text-align:center;top:604.20px;font-size:10.0px;color:#1e293b;font-weight:400;letter-spacing:0.12px;-webkit-text-stroke:0.12px #1e293b;">$0</div>
<div class="t" style="left:1054.25px;width:600px;text-align:center;top:604.20px;font-size:10.0px;color:#1e293b;font-weight:400;letter-spacing:0.12px;-webkit-text-stroke:0.12px #1e293b;">$0</div>
<div class="t" style="left:1195.75px;width:600px;text-align:center;top:604.20px;font-size:10.0px;color:#1e293b;font-weight:400;letter-spacing:0.12px;-webkit-text-stroke:0.12px #1e293b;">$0</div>
<div class="t" style="left:1337.25px;width:600px;text-align:center;top:604.20px;font-size:10.0px;color:#1e293b;font-weight:400;letter-spacing:0.12px;-webkit-text-stroke:0.12px #1e293b;">$0</div>
<div class="t" style="left:1478.75px;width:600px;text-align:center;top:604.20px;font-size:10.0px;color:#1e293b;font-weight:400;letter-spacing:0.12px;-webkit-text-stroke:0.12px #1e293b;">$0</div>
<div class="b" style="left:258px;top:622px;width:1591px;height:1px;background:#f1f5f9;"></div>
<div class="t " style="left:268.4px;top:630.73px;font-size:10.6px;color:#1e293b;font-weight:400;-webkit-text-stroke:0.12px #1e293b;">Management Fees</div>
<div class="t" style="left:346.75px;width:600px;text-align:center;top:631.84px;font-size:10.0px;color:#1e293b;font-weight:400;letter-spacing:0.12px;-webkit-text-stroke:0.12px #1e293b;">$0</div>
<div class="t" style="left:488.25px;width:600px;text-align:center;top:631.84px;font-size:10.0px;color:#1e293b;font-weight:400;letter-spacing:0.12px;-webkit-text-stroke:0.12px #1e293b;">$0</div>
<div class="t" style="left:629.75px;width:600px;text-align:center;top:631.84px;font-size:10.0px;color:#1e293b;font-weight:400;letter-spacing:0.12px;-webkit-text-stroke:0.12px #1e293b;">$0</div>
<div class="t" style="left:771.25px;width:600px;text-align:center;top:631.84px;font-size:10.0px;color:#1e293b;font-weight:400;letter-spacing:0.12px;-webkit-text-stroke:0.12px #1e293b;">$0</div>
<div class="t" style="left:912.75px;width:600px;text-align:center;top:631.84px;font-size:10.0px;color:#1e293b;font-weight:400;letter-spacing:0.12px;-webkit-text-stroke:0.12px #1e293b;">$0</div>
<div class="t" style="left:1054.25px;width:600px;text-align:center;top:631.84px;font-size:10.0px;color:#1e293b;font-weight:400;letter-spacing:0.12px;-webkit-text-stroke:0.12px #1e293b;">$0</div>
<div class="t" style="left:1195.75px;width:600px;text-align:center;top:631.84px;font-size:10.0px;color:#1e293b;font-weight:400;letter-spacing:0.12px;-webkit-text-stroke:0.12px #1e293b;">$0</div>
<div class="t" style="left:1337.25px;width:600px;text-align:center;top:631.84px;font-size:10.0px;color:#1e293b;font-weight:400;letter-spacing:0.12px;-webkit-text-stroke:0.12px #1e293b;">$0</div>
<div class="t" style="left:1478.75px;width:600px;text-align:center;top:631.84px;font-size:10.0px;color:#1e293b;font-weight:400;letter-spacing:0.12px;-webkit-text-stroke:0.12px #1e293b;">$0</div>
<div class="b" style="left:258px;top:650px;width:1591px;height:1px;background:#f1f5f9;"></div>
<div class="t " style="left:268.4px;top:658.40px;font-size:10.6px;color:#1e293b;font-weight:400;-webkit-text-stroke:0.12px #1e293b;">Management Fees - Gross of Offsets, Waivers, Discounts &amp;</div>
<div class="t " style="left:268.4px;top:671.80px;font-size:10.6px;color:#1e293b;font-weight:400;-webkit-text-stroke:0.12px #1e293b;">Rebates</div>
<div class="t" style="left:346.75px;width:600px;text-align:center;top:666.20px;font-size:10.0px;color:#1e293b;font-weight:400;letter-spacing:0.12px;-webkit-text-stroke:0.12px #1e293b;">$0</div>
<div class="t" style="left:488.25px;width:600px;text-align:center;top:666.20px;font-size:10.0px;color:#1e293b;font-weight:400;letter-spacing:0.12px;-webkit-text-stroke:0.12px #1e293b;">($46,913)</div>
<div class="t" style="left:629.75px;width:600px;text-align:center;top:666.20px;font-size:10.0px;color:#1e293b;font-weight:400;letter-spacing:0.12px;-webkit-text-stroke:0.12px #1e293b;">($562,950)</div>
<div class="t" style="left:771.25px;width:600px;text-align:center;top:666.20px;font-size:10.0px;color:#1e293b;font-weight:400;letter-spacing:0.12px;-webkit-text-stroke:0.12px #1e293b;">$0</div>
<div class="t" style="left:912.75px;width:600px;text-align:center;top:666.20px;font-size:10.0px;color:#1e293b;font-weight:400;letter-spacing:0.12px;-webkit-text-stroke:0.12px #1e293b;">($281,250)</div>
<div class="t" style="left:1054.25px;width:600px;text-align:center;top:666.20px;font-size:10.0px;color:#1e293b;font-weight:400;letter-spacing:0.12px;-webkit-text-stroke:0.12px #1e293b;">($3,375,000)</div>
<div class="t" style="left:1195.75px;width:600px;text-align:center;top:666.20px;font-size:10.0px;color:#1e293b;font-weight:400;letter-spacing:0.12px;-webkit-text-stroke:0.12px #1e293b;">$0</div>
<div class="t" style="left:1337.25px;width:600px;text-align:center;top:666.20px;font-size:10.0px;color:#1e293b;font-weight:400;letter-spacing:0.12px;-webkit-text-stroke:0.12px #1e293b;">$0</div>
<div class="t" style="left:1478.75px;width:600px;text-align:center;top:666.20px;font-size:10.0px;color:#1e293b;font-weight:400;letter-spacing:0.12px;-webkit-text-stroke:0.12px #1e293b;">$0</div>
<div class="b" style="left:258px;top:691px;width:1591px;height:1px;background:#f1f5f9;"></div>
<div class="t " style="left:268.4px;top:699.47px;font-size:10.6px;color:#1e293b;font-weight:400;-webkit-text-stroke:0.12px #1e293b;">Less Management Fee Rebate</div>
<div class="t" style="left:346.75px;width:600px;text-align:center;top:700.58px;font-size:10.0px;color:#1e293b;font-weight:400;letter-spacing:0.12px;-webkit-text-stroke:0.12px #1e293b;">$0</div>
<div class="t" style="left:488.25px;width:600px;text-align:center;top:700.58px;font-size:10.0px;color:#1e293b;font-weight:400;letter-spacing:0.12px;-webkit-text-stroke:0.12px #1e293b;">$0</div>
<div class="t" style="left:629.75px;width:600px;text-align:center;top:700.58px;font-size:10.0px;color:#1e293b;font-weight:400;letter-spacing:0.12px;-webkit-text-stroke:0.12px #1e293b;">$0</div>
<div class="t" style="left:771.25px;width:600px;text-align:center;top:700.58px;font-size:10.0px;color:#1e293b;font-weight:400;letter-spacing:0.12px;-webkit-text-stroke:0.12px #1e293b;">$0</div>
<div class="t" style="left:912.75px;width:600px;text-align:center;top:700.58px;font-size:10.0px;color:#1e293b;font-weight:400;letter-spacing:0.12px;-webkit-text-stroke:0.12px #1e293b;">$0</div>
<div class="t" style="left:1054.25px;width:600px;text-align:center;top:700.58px;font-size:10.0px;color:#1e293b;font-weight:400;letter-spacing:0.12px;-webkit-text-stroke:0.12px #1e293b;">$0</div>
<div class="t" style="left:1195.75px;width:600px;text-align:center;top:700.58px;font-size:10.0px;color:#1e293b;font-weight:400;letter-spacing:0.12px;-webkit-text-stroke:0.12px #1e293b;">$0</div>
<div class="t" style="left:1337.25px;width:600px;text-align:center;top:700.58px;font-size:10.0px;color:#1e293b;font-weight:400;letter-spacing:0.12px;-webkit-text-stroke:0.12px #1e293b;">$0</div>
<div class="t" style="left:1478.75px;width:600px;text-align:center;top:700.58px;font-size:10.0px;color:#1e293b;font-weight:400;letter-spacing:0.12px;-webkit-text-stroke:0.12px #1e293b;">$0</div>
<div class="b" style="left:258px;top:719px;width:1591px;height:1px;background:#f1f5f9;"></div>
<div class="t " style="left:268.4px;top:727.11px;font-size:10.6px;color:#1e293b;font-weight:400;-webkit-text-stroke:0.12px #1e293b;">Less Fee Waivers</div>
<div class="t" style="left:346.75px;width:600px;text-align:center;top:728.22px;font-size:10.0px;color:#1e293b;font-weight:400;letter-spacing:0.12px;-webkit-text-stroke:0.12px #1e293b;">$0</div>
<div class="t" style="left:488.25px;width:600px;text-align:center;top:728.22px;font-size:10.0px;color:#1e293b;font-weight:400;letter-spacing:0.12px;-webkit-text-stroke:0.12px #1e293b;">$0</div>
<div class="t" style="left:629.75px;width:600px;text-align:center;top:728.22px;font-size:10.0px;color:#1e293b;font-weight:400;letter-spacing:0.12px;-webkit-text-stroke:0.12px #1e293b;">$0</div>
<div class="t" style="left:771.25px;width:600px;text-align:center;top:728.22px;font-size:10.0px;color:#1e293b;font-weight:400;letter-spacing:0.12px;-webkit-text-stroke:0.12px #1e293b;">$0</div>
<div class="t" style="left:912.75px;width:600px;text-align:center;top:728.22px;font-size:10.0px;color:#1e293b;font-weight:400;letter-spacing:0.12px;-webkit-text-stroke:0.12px #1e293b;">$0</div>
<div class="t" style="left:1054.25px;width:600px;text-align:center;top:728.22px;font-size:10.0px;color:#1e293b;font-weight:400;letter-spacing:0.12px;-webkit-text-stroke:0.12px #1e293b;">$0</div>
<div class="t" style="left:1195.75px;width:600px;text-align:center;top:728.22px;font-size:10.0px;color:#1e293b;font-weight:400;letter-spacing:0.12px;-webkit-text-stroke:0.12px #1e293b;">$0</div>
<div class="t" style="left:1337.25px;width:600px;text-align:center;top:728.22px;font-size:10.0px;color:#1e293b;font-weight:400;letter-spacing:0.12px;-webkit-text-stroke:0.12px #1e293b;">$0</div>
<div class="t" style="left:1478.75px;width:600px;text-align:center;top:728.22px;font-size:10.0px;color:#1e293b;font-weight:400;letter-spacing:0.12px;-webkit-text-stroke:0.12px #1e293b;">$0</div>
<div class="b" style="left:258px;top:746px;width:1591px;height:1px;background:#f1f5f9;"></div>
<div class="t " style="left:268.4px;top:754.75px;font-size:10.6px;color:#1e293b;font-weight:400;-webkit-text-stroke:0.12px #1e293b;">Less Fee Discounts</div>
<div class="t" style="left:346.75px;width:600px;text-align:center;top:755.86px;font-size:10.0px;color:#1e293b;font-weight:400;letter-spacing:0.12px;-webkit-text-stroke:0.12px #1e293b;">$0</div>
<div class="t" style="left:488.25px;width:600px;text-align:center;top:755.86px;font-size:10.0px;color:#1e293b;font-weight:400;letter-spacing:0.12px;-webkit-text-stroke:0.12px #1e293b;">$0</div>
<div class="t" style="left:629.75px;width:600px;text-align:center;top:755.86px;font-size:10.0px;color:#1e293b;font-weight:400;letter-spacing:0.12px;-webkit-text-stroke:0.12px #1e293b;">$0</div>
<div class="t" style="left:771.25px;width:600px;text-align:center;top:755.86px;font-size:10.0px;color:#1e293b;font-weight:400;letter-spacing:0.12px;-webkit-text-stroke:0.12px #1e293b;">$0</div>
<div class="t" style="left:912.75px;width:600px;text-align:center;top:755.86px;font-size:10.0px;color:#1e293b;font-weight:400;letter-spacing:0.12px;-webkit-text-stroke:0.12px #1e293b;">$0</div>
<div class="t" style="left:1054.25px;width:600px;text-align:center;top:755.86px;font-size:10.0px;color:#1e293b;font-weight:400;letter-spacing:0.12px;-webkit-text-stroke:0.12px #1e293b;">$0</div>
<div class="t" style="left:1195.75px;width:600px;text-align:center;top:755.86px;font-size:10.0px;color:#1e293b;font-weight:400;letter-spacing:0.12px;-webkit-text-stroke:0.12px #1e293b;">$0</div>
<div class="t" style="left:1337.25px;width:600px;text-align:center;top:755.86px;font-size:10.0px;color:#1e293b;font-weight:400;letter-spacing:0.12px;-webkit-text-stroke:0.12px #1e293b;">$0</div>
<div class="t" style="left:1478.75px;width:600px;text-align:center;top:755.86px;font-size:10.0px;color:#1e293b;font-weight:400;letter-spacing:0.12px;-webkit-text-stroke:0.12px #1e293b;">$0</div>
<div class="b" style="left:258px;top:774px;width:1591px;height:1px;background:#f1f5f9;"></div>
<div class="t " style="left:268.4px;top:782.39px;font-size:10.6px;color:#1e293b;font-weight:400;-webkit-text-stroke:0.12px #1e293b;">Less Offsets to Management Fees</div>
<div class="t" style="left:346.75px;width:600px;text-align:center;top:783.50px;font-size:10.0px;color:#1e293b;font-weight:400;letter-spacing:0.12px;-webkit-text-stroke:0.12px #1e293b;">$0</div>
<div class="t" style="left:488.25px;width:600px;text-align:center;top:783.50px;font-size:10.0px;color:#1e293b;font-weight:400;letter-spacing:0.12px;-webkit-text-stroke:0.12px #1e293b;">$0</div>
<div class="t" style="left:629.75px;width:600px;text-align:center;top:783.50px;font-size:10.0px;color:#1e293b;font-weight:400;letter-spacing:0.12px;-webkit-text-stroke:0.12px #1e293b;">$0</div>
<div class="t" style="left:771.25px;width:600px;text-align:center;top:783.50px;font-size:10.0px;color:#1e293b;font-weight:400;letter-spacing:0.12px;-webkit-text-stroke:0.12px #1e293b;">$0</div>
<div class="t" style="left:912.75px;width:600px;text-align:center;top:783.50px;font-size:10.0px;color:#1e293b;font-weight:400;letter-spacing:0.12px;-webkit-text-stroke:0.12px #1e293b;">$0</div>
<div class="t" style="left:1054.25px;width:600px;text-align:center;top:783.50px;font-size:10.0px;color:#1e293b;font-weight:400;letter-spacing:0.12px;-webkit-text-stroke:0.12px #1e293b;">$0</div>
<div class="t" style="left:1195.75px;width:600px;text-align:center;top:783.50px;font-size:10.0px;color:#1e293b;font-weight:400;letter-spacing:0.12px;-webkit-text-stroke:0.12px #1e293b;">$0</div>
<div class="t" style="left:1337.25px;width:600px;text-align:center;top:783.50px;font-size:10.0px;color:#1e293b;font-weight:400;letter-spacing:0.12px;-webkit-text-stroke:0.12px #1e293b;">$0</div>
<div class="t" style="left:1478.75px;width:600px;text-align:center;top:783.50px;font-size:10.0px;color:#1e293b;font-weight:400;letter-spacing:0.12px;-webkit-text-stroke:0.12px #1e293b;">$0</div>
<div class="b" style="left:258px;top:802px;width:1591px;height:1px;background:#f1f5f9;"></div>
<div class="t " style="left:268.4px;top:810.06px;font-size:10.6px;color:#1e293b;font-weight:400;-webkit-text-stroke:0.12px #1e293b;">Management Fees - Net of Offsets, Waivers, Discounts &amp;</div>
<div class="t " style="left:268.4px;top:823.46px;font-size:10.6px;color:#1e293b;font-weight:400;-webkit-text-stroke:0.12px #1e293b;">Rebates</div>
<div class="t" style="left:346.75px;width:600px;text-align:center;top:817.86px;font-size:10.0px;color:#1e293b;font-weight:400;letter-spacing:0.12px;-webkit-text-stroke:0.12px #1e293b;">$0</div>
<div class="t" style="left:488.25px;width:600px;text-align:center;top:817.86px;font-size:10.0px;color:#1e293b;font-weight:400;letter-spacing:0.12px;-webkit-text-stroke:0.12px #1e293b;">($46,913)</div>
<div class="t" style="left:629.75px;width:600px;text-align:center;top:817.86px;font-size:10.0px;color:#1e293b;font-weight:400;letter-spacing:0.12px;-webkit-text-stroke:0.12px #1e293b;">($562,950)</div>
<div class="t" style="left:771.25px;width:600px;text-align:center;top:817.86px;font-size:10.0px;color:#1e293b;font-weight:400;letter-spacing:0.12px;-webkit-text-stroke:0.12px #1e293b;">$0</div>
<div class="t" style="left:912.75px;width:600px;text-align:center;top:817.86px;font-size:10.0px;color:#1e293b;font-weight:400;letter-spacing:0.12px;-webkit-text-stroke:0.12px #1e293b;">$0</div>
<div class="t" style="left:1054.25px;width:600px;text-align:center;top:817.86px;font-size:10.0px;color:#1e293b;font-weight:400;letter-spacing:0.12px;-webkit-text-stroke:0.12px #1e293b;">$0</div>
<div class="t" style="left:1195.75px;width:600px;text-align:center;top:817.86px;font-size:10.0px;color:#1e293b;font-weight:400;letter-spacing:0.12px;-webkit-text-stroke:0.12px #1e293b;">$0</div>
<div class="t" style="left:1337.25px;width:600px;text-align:center;top:817.86px;font-size:10.0px;color:#1e293b;font-weight:400;letter-spacing:0.12px;-webkit-text-stroke:0.12px #1e293b;">$0</div>
<div class="t" style="left:1478.75px;width:600px;text-align:center;top:817.86px;font-size:10.0px;color:#1e293b;font-weight:400;letter-spacing:0.12px;-webkit-text-stroke:0.12px #1e293b;">$0</div>
<div class="b" style="left:258px;top:843px;width:1591px;height:1px;background:#f1f5f9;"></div>
<div class="t" style="left:346.75px;width:600px;text-align:center;top:852.24px;font-size:10.0px;color:#1e293b;font-weight:400;letter-spacing:0.12px;-webkit-text-stroke:0.12px #1e293b;">$0</div>
<div class="t" style="left:488.25px;width:600px;text-align:center;top:852.24px;font-size:10.0px;color:#1e293b;font-weight:400;letter-spacing:0.12px;-webkit-text-stroke:0.12px #1e293b;">$0</div>
<div class="t" style="left:629.75px;width:600px;text-align:center;top:852.24px;font-size:10.0px;color:#1e293b;font-weight:400;letter-spacing:0.12px;-webkit-text-stroke:0.12px #1e293b;">$0</div>
<div class="t" style="left:771.25px;width:600px;text-align:center;top:852.24px;font-size:10.0px;color:#1e293b;font-weight:400;letter-spacing:0.12px;-webkit-text-stroke:0.12px #1e293b;">$0</div>
<div class="t" style="left:912.75px;width:600px;text-align:center;top:852.24px;font-size:10.0px;color:#1e293b;font-weight:400;letter-spacing:0.12px;-webkit-text-stroke:0.12px #1e293b;">$0</div>
<div class="t" style="left:1054.25px;width:600px;text-align:center;top:852.24px;font-size:10.0px;color:#1e293b;font-weight:400;letter-spacing:0.12px;-webkit-text-stroke:0.12px #1e293b;">$0</div>
<div class="t" style="left:1195.75px;width:600px;text-align:center;top:852.24px;font-size:10.0px;color:#1e293b;font-weight:400;letter-spacing:0.12px;-webkit-text-stroke:0.12px #1e293b;">$0</div>
<div class="t" style="left:1337.25px;width:600px;text-align:center;top:852.24px;font-size:10.0px;color:#1e293b;font-weight:400;letter-spacing:0.12px;-webkit-text-stroke:0.12px #1e293b;">$0</div>
<div class="t" style="left:1478.75px;width:600px;text-align:center;top:852.24px;font-size:10.0px;color:#1e293b;font-weight:400;letter-spacing:0.12px;-webkit-text-stroke:0.12px #1e293b;">$0</div>
<div class="b" style="left:258px;top:870px;width:1591px;height:1px;background:#f1f5f9;"></div>
<div class="b" style="left:717px;top:389px;width:1px;height:470px;background:#e2e8f0;"></div>
<div class="b" style="left:859px;top:389px;width:1px;height:470px;background:#e2e8f0;"></div>
<div class="b" style="left:1000px;top:389px;width:1px;height:470px;background:#cbd5e1;"></div>
<div class="b" style="left:1142px;top:389px;width:1px;height:470px;background:#e2e8f0;"></div>
<div class="b" style="left:1283px;top:389px;width:1px;height:470px;background:#e2e8f0;"></div>
<div class="b" style="left:1425px;top:389px;width:1px;height:470px;background:#cbd5e1;"></div>
<div class="b" style="left:1566px;top:389px;width:1px;height:470px;background:#e2e8f0;"></div>
<div class="b" style="left:1708px;top:389px;width:1px;height:470px;background:#e2e8f0;"></div>
</body></html>
